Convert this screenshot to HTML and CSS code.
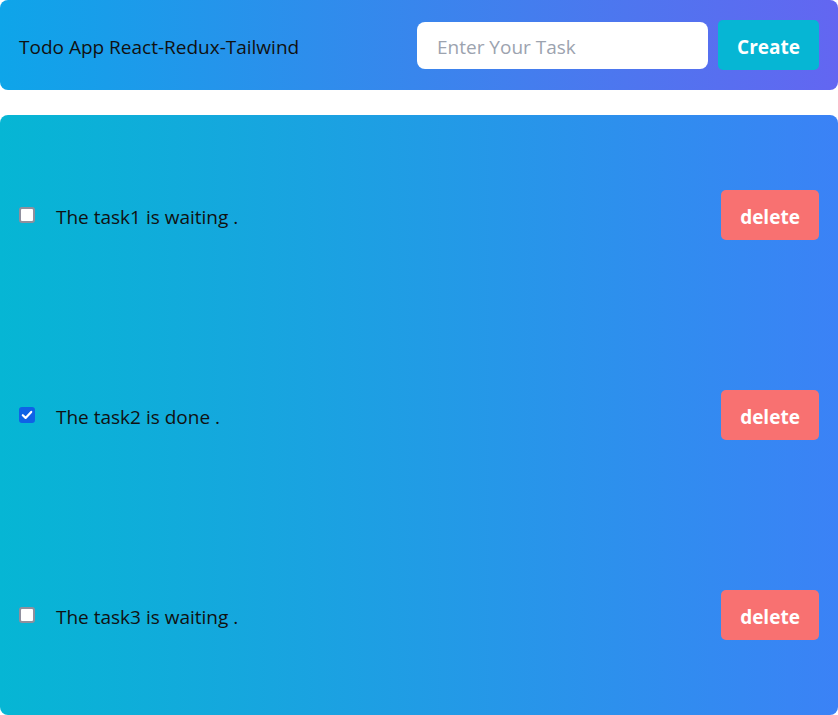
FILE: index.html
```html
<!DOCTYPE html>
<html>
<head>
<meta charset="utf-8">
<link rel="stylesheet" href="styles.css">
</head>
<body>
<div class="app">
  <header class="header">
    <div class="title">Todo App React-Redux-Tailwind</div>
    <form class="form">
      <input class="task-input" type="text" placeholder="Enter Your Task">
      <button class="create-btn" type="button">Create</button>
    </form>
  </header>
  <ul class="list">
    <li class="item">
      <input class="check" type="checkbox">
      <span class="text">The task1 is waiting .</span>
      <button class="delete-btn" type="button">delete</button>
    </li>
    <li class="item">
      <input class="check" type="checkbox" checked>
      <span class="text">The task2 is done .</span>
      <button class="delete-btn" type="button">delete</button>
    </li>
    <li class="item">
      <input class="check" type="checkbox">
      <span class="text">The task3 is waiting .</span>
      <button class="delete-btn" type="button">delete</button>
    </li>
  </ul>
</div>
</body>
</html>
```
FILE: styles.css
```css
* { box-sizing: border-box; }
html, body { margin: 0; padding: 0; background: #fff; }
body {
  font-family: "Open Sans", "Noto Sans", sans-serif;
  color: #111;
}
.app {
  width: 838px;
  display: flex;
  flex-direction: column;
  gap: 25px;
}
.header {
  height: 90px;
  border-radius: 8px;
  background: linear-gradient(to right, #0ea5e9, #6366f1);
  display: flex;
  align-items: center;
  justify-content: space-between;
  padding: 0 19px;
}
.title {
  font-size: 19px;
  padding-top: 3px;
}
.form {
  display: flex;
  align-items: center;
  gap: 10px;
  margin: 0;
}
.task-input {
  width: 291px;
  height: 47px;
  border: none;
  border-radius: 8px;
  padding: 3px 20px 0;
  font-family: inherit;
  font-size: 19px;
  outline: none;
  background: #fff;
}
.task-input::placeholder { color: #9ca3af; }
.create-btn {
  width: 101px;
  height: 50px;
  border: none;
  border-radius: 5px;
  background: #06b6d4;
  color: #fff;
  font-family: inherit;
  font-weight: 700;
  font-size: 19px;
  padding: 3px 0 0;
}
.list {
  list-style: none;
  margin: 0;
  padding: 0;
  height: 600px;
  border-radius: 8px;
  background: linear-gradient(to right, #06b6d4, #3b82f6);
  display: flex;
  flex-direction: column;
}
.item {
  height: 200px;
  display: flex;
  align-items: center;
  padding: 0 19px;
}
.check {
  appearance: none;
  -webkit-appearance: none;
  width: 16px;
  height: 16px;
  margin: 0;
  border: 2px solid #8f8f9d;
  border-radius: 3px;
  background: #fff;
}
.check:checked {
  border-color: #0f62e6;
  background: #0f62e6 url("data:image/svg+xml;utf8,<svg xmlns='http://www.w3.org/2000/svg' viewBox='0 0 12 12'><path d='M1.8 6.2 L4.6 8.9 L10.2 2.9' fill='none' stroke='white' stroke-width='2.2' stroke-linecap='round' stroke-linejoin='round'/></svg>") center/12px 12px no-repeat;
}
.text {
  margin-left: 21px;
  font-size: 19px;
  flex: 1;
  padding-top: 3px;
}
.delete-btn {
  width: 98px;
  height: 50px;
  border: none;
  border-radius: 5px;
  background: #f87171;
  color: #fff;
  font-family: inherit;
  font-weight: 700;
  font-size: 19px;
  padding: 3px 0 0;
}
```
